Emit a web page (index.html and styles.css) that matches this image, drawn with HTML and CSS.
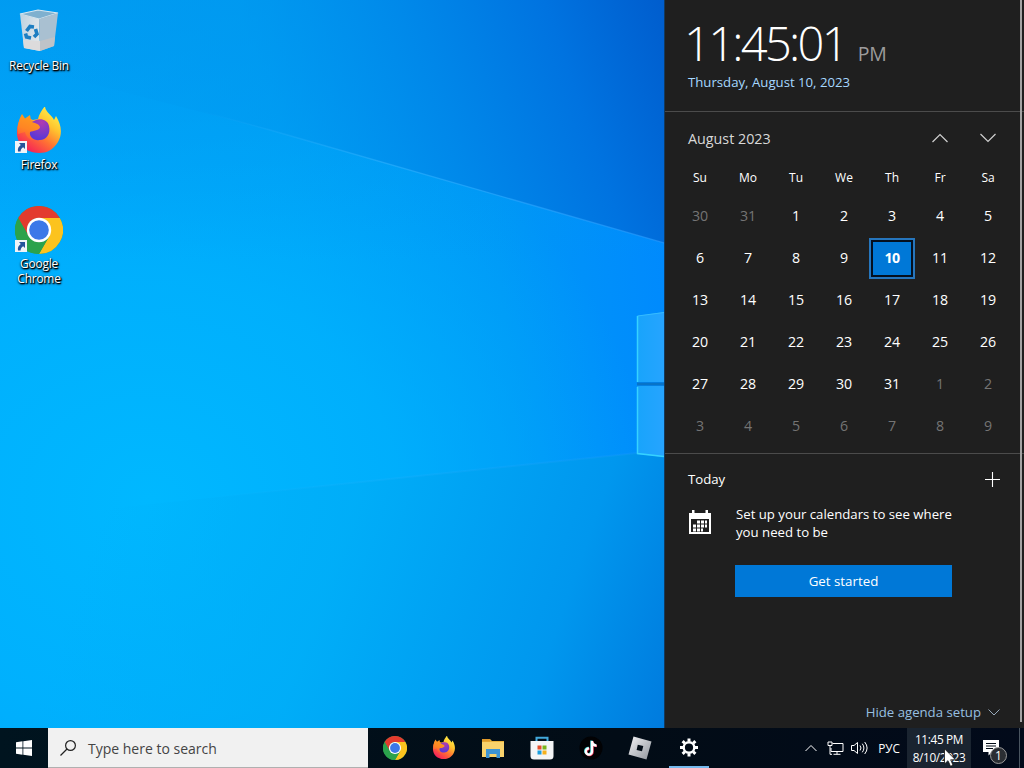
FILE: index.html
```html
<!DOCTYPE html>
<html lang="en">
<head>
  <meta charset="UTF-8">
  <meta name="viewport" content="width=device-width, initial-scale=1.0">
  <title>Desktop</title>
  <link rel="stylesheet" href="styles.css">
</head>
<body>
  <!-- shared icons -->
  <svg class="defs" width="0" height="0">
    <defs>
      <linearGradient id="ffBody" x1="0.85" y1="0.1" x2="0.25" y2="1">
        <stop offset="0" stop-color="#fff04a"/>
        <stop offset="0.3" stop-color="#ffc42e"/>
        <stop offset="0.6" stop-color="#ff7333"/>
        <stop offset="1" stop-color="#f5195c"/>
      </linearGradient>
      <linearGradient id="ffEar" x1="0.3" y1="0" x2="0" y2="1">
        <stop offset="0" stop-color="#ff9a1e"/>
        <stop offset="0.5" stop-color="#ff8524"/>
        <stop offset="1" stop-color="#ff4f3c"/>
      </linearGradient>
      <radialGradient id="ffGlobe" cx="0.6" cy="0.15" r="0.8">
        <stop offset="0" stop-color="#b13bb0"/>
        <stop offset="1" stop-color="#5b38d6"/>
      </radialGradient>
      <linearGradient id="binSide" x1="0" y1="0" x2="1" y2="0.3">
        <stop offset="0" stop-color="#bed2e0"/>
        <stop offset="1" stop-color="#dfe6eb"/>
      </linearGradient>
      <linearGradient id="robloxFill" x1="0" y1="0" x2="1" y2="1">
        <stop offset="0" stop-color="#f4f4f6"/>
        <stop offset="1" stop-color="#8e939b"/>
      </linearGradient>
    </defs>
    <symbol id="chrome" viewBox="0 0 48 48">
      <circle cx="24" cy="24" r="24" fill="#2ba24c"/>
      <path d="M24 12 H44.8 A24 24 0 0 1 24 48 L34.4 30 L24 24 Z" fill="#fcc31e"/>
      <path d="M3.2 12 A24 24 0 0 1 44.8 12 H24 A12 12 0 0 0 13.6 18 L13.6 30 Z" fill="#e33b2e"/>
      <path d="M3.2 12 L13.6 30 L24 36 L34.4 30 L24 48 A24 24 0 0 1 3.2 12 Z" fill="#2ba24c"/>
      <circle cx="24" cy="24" r="12.2" fill="#fff"/>
      <circle cx="24" cy="24" r="9.8" fill="#3c78e8"/>
    </symbol>
    <symbol id="firefox" viewBox="0 1 48 48">
      <path d="M30 0 C30 6 37 9 39 14 L41 10 C46 18 48 27 43 36 C38 44 32 47 24 47 C10 47 1 37 2 25 C2 19 4 14 7 10 C8 12 9 13 10 14 C12 12 15 12 18 14 L23 13 C24 8 27 4 30 0 Z" fill="url(#ffBody)"/>
      <path d="M7 8 L10 12.500 L15 9 L16 14 C20 16 24 17 25 20 C25 23 22 24 19 25 C15 26 15 31 19 34 C15 34 11 31 10 26 L3 28 C2 20 4 13 7 8 Z" fill="url(#ffEar)"/>
      <path d="M21 14 C26 12 33 14 34 20 C36 28 31 34 25 34 C19 35 14 31 15 26 C18 25 25 24 25 21 C24 18 20 17 17 16 Z" fill="url(#ffGlobe)"/>
    </symbol>
    <symbol id="shortcut" viewBox="0 0 12 12">
      <rect width="12" height="12" fill="#f0f3f8"/>
      <path d="M4 2 H10 V8 L8.2 6.3 C6.5 7.3 5.7 8.6 5.6 10.4 H3 C2.4 7.4 3.8 5.3 5.8 4 Z" fill="#24539b"/>
    </symbol>
  </svg>

  <div class="workspace">
    <main class="desktop">
      <svg class="wallpaper" viewBox="0 0 664 728" preserveAspectRatio="none">
        <defs>
          <linearGradient id="sky" x1="0" y1="300" x2="664" y2="240" gradientUnits="userSpaceOnUse">
            <stop offset="0" stop-color="#00a9fe"/>
            <stop offset="0.45" stop-color="#00a4fa"/>
            <stop offset="0.75" stop-color="#0098f7"/>
            <stop offset="1" stop-color="#008afd"/>
          </linearGradient>
          <!-- both wedges fade out towards the left edge -->
          <linearGradient id="upper" x1="60" y1="190" x2="674" y2="-20" gradientUnits="userSpaceOnUse">
            <stop offset="0" stop-color="#009cf2" stop-opacity="0"/>
            <stop offset="0.35" stop-color="#0099f0" stop-opacity="0.6"/>
            <stop offset="0.6" stop-color="#0087e9" stop-opacity="0.95"/>
            <stop offset="0.8" stop-color="#0073e0"/>
            <stop offset="1" stop-color="#005acb"/>
          </linearGradient>
          <linearGradient id="lower" x1="110" y1="490" x2="740" y2="710" gradientUnits="userSpaceOnUse">
            <stop offset="0" stop-color="#00b0f8" stop-opacity="0"/>
            <stop offset="0.35" stop-color="#00adf7" stop-opacity="0.8"/>
            <stop offset="0.7" stop-color="#0097ee"/>
            <stop offset="1" stop-color="#006dd6"/>
          </linearGradient>
          <linearGradient id="top" x1="0" y1="0" x2="0" y2="260" gradientUnits="userSpaceOnUse">
            <stop offset="0" stop-color="#0096ec" stop-opacity="0.7"/>
            <stop offset="1" stop-color="#0096ec" stop-opacity="0"/>
          </linearGradient>
          <radialGradient id="glow" cx="0" cy="0" r="1" gradientUnits="userSpaceOnUse" gradientTransform="translate(150 500) scale(500 440)">
            <stop offset="0" stop-color="#00b8ff"/>
            <stop offset="0.5" stop-color="#00b3fd" stop-opacity="0.75"/>
            <stop offset="1" stop-color="#00acfa" stop-opacity="0"/>
          </radialGradient>
          <linearGradient id="beam" x1="200" y1="0" x2="664" y2="0" gradientUnits="userSpaceOnUse">
            <stop offset="0" stop-color="#38b4ff" stop-opacity="0"/>
            <stop offset="0.4" stop-color="#38b4ff" stop-opacity="0.5"/>
            <stop offset="1" stop-color="#2c9cff" stop-opacity="0.6"/>
          </linearGradient>
          <linearGradient id="pane" x1="637" y1="0" x2="664" y2="0" gradientUnits="userSpaceOnUse">
            <stop offset="0" stop-color="#18a4fb"/>
            <stop offset="1" stop-color="#26a4ff"/>
          </linearGradient>
        </defs>
        <rect width="664" height="728" fill="url(#sky)"/>
        <rect width="664" height="728" fill="url(#glow)"/>
        <rect width="664" height="260" fill="url(#top)"/>
        <path d="M0 0 H664 V243 L270 130 L0 60 Z" fill="url(#upper)"/>
        <path d="M0 520 L637 453 H664 V728 H0 Z" fill="url(#lower)"/>
        <path d="M200 111 L270 130 L664 243" fill="none" stroke="url(#beam)" stroke-width="1.3"/>
        <path d="M200 499 L637 453" fill="none" stroke="url(#beam)" stroke-width="2" opacity="0.3"/>
        <path d="M637 316 L664 312 V382 H637 Z" fill="url(#pane)"/>
        <path d="M637 386 H664 V457 L637 454 Z" fill="url(#pane)"/>
        <path d="M637 384 H664" stroke="#0873c8" stroke-width="3"/>
        <path d="M664 312.500 L637.500 316" fill="none" stroke="#36bcff"/>
        <path d="M637.500 316 V382 M637.500 387 V453.500 L664 456.500" fill="none" stroke="#36d2ff" stroke-width="1.500"/>
      </svg>

      <div class="shortcuts">
        <div class="shortcut">
          <svg class="shortcut-icon" viewBox="0 0 48 48">
            <path d="M5 6 L23 2 L43 5 L24 11 Z" fill="#7fb0cf" stroke="#dbe8f0" stroke-width="1.200"/>
            <path d="M5 6 L24 11 L25 43 L9 40 Z" fill="url(#binSide)"/>
            <path d="M24 11 L43 5 L39 38 L25 43 Z" fill="#a9c0d1"/>
            <path d="M8 32 L25 33 V43 L9 40 Z" fill="#dcdbdc"/>
            <path d="M25 33 L40 29 L39 38 L25 43 Z" fill="#bfc3c8"/>
            <g fill="none" stroke="#1c7ec2" stroke-width="3.600">
              <path d="M11.500 23 L15 18.500 L19 19"/>
              <path d="M20.500 21 L22 26 L19 29"/>
              <path d="M16 30 L11.500 29 L10.500 25.500"/>
            </g>
          </svg>
          <span>Recycle Bin</span>
        </div>
        <div class="shortcut">
          <svg class="shortcut-icon"><use href="#firefox"/></svg>
          <svg class="shortcut-arrow"><use href="#shortcut"/></svg>
          <span>Firefox</span>
        </div>
        <div class="shortcut">
          <svg class="shortcut-icon"><use href="#chrome"/></svg>
          <svg class="shortcut-arrow"><use href="#shortcut"/></svg>
          <span>Google<br>Chrome</span>
        </div>
      </div>
    </main>

    <aside class="flyout">
      <header class="clock">
        <div class="clock-time"><span class="clock-digits">11:45:01</span><span class="clock-period">PM</span></div>
        <div class="clock-date">Thursday, August 10, 2023</div>
      </header>

      <section class="calendar">
        <div class="calendar-header">
          <span class="calendar-month">August 2023</span>
          <svg class="calendar-arrow" viewBox="0 0 16 16"><path d="M0.500 12 L8 4.500 L15.500 12"/></svg>
          <svg class="calendar-arrow" viewBox="0 0 16 16"><path d="M0.500 4 L8 11.500 L15.500 4"/></svg>
        </div>
        <div class="weekdays">
          <span>Su</span><span>Mo</span><span>Tu</span><span>We</span><span>Th</span><span>Fr</span><span>Sa</span>
        </div>
        <div class="days">
          <span class="other">30</span><span class="other">31</span><span>1</span><span>2</span><span>3</span><span>4</span><span>5</span>
          <span>6</span><span>7</span><span>8</span><span>9</span><span class="today">10</span><span>11</span><span>12</span>
          <span>13</span><span>14</span><span>15</span><span>16</span><span>17</span><span>18</span><span>19</span>
          <span>20</span><span>21</span><span>22</span><span>23</span><span>24</span><span>25</span><span>26</span>
          <span>27</span><span>28</span><span>29</span><span>30</span><span>31</span><span class="other">1</span><span class="other">2</span>
          <span class="other">3</span><span class="other">4</span><span class="other">5</span><span class="other">6</span><span class="other">7</span><span class="other">8</span><span class="other">9</span>
        </div>
      </section>

      <section class="agenda">
        <div class="agenda-header">
          <span>Today</span>
          <svg class="agenda-add" viewBox="0 0 15 15"><path d="M7.500 0 V15 M0 7.500 H15"/></svg>
        </div>
        <div class="agenda-setup">
          <svg class="agenda-icon" viewBox="0 0 22 24">
            <path d="M0 3 H3 V0 H5.500 V3 H16.500 V0 H19 V3 H22 V24 H0 Z M2 9 V22 H20 V9 Z" fill="#fff" fill-rule="evenodd"/>
            <path d="M8 12 H18 M4 16 H18 M4 20 H14" stroke="#fff" stroke-width="2.800" stroke-dasharray="3 1"/>
          </svg>
          <p>Set up your calendars to see where<br>you need to be</p>
        </div>
        <button class="agenda-button">Get started</button>
        <div class="agenda-hide">
          <span>Hide agenda setup</span>
          <svg viewBox="0 0 12 12"><path d="M0.500 3.500 L6 9 L11.500 3.500"/></svg>
        </div>
      </section>
    </aside>
  </div>

  <footer class="taskbar">
    <div class="start">
      <svg viewBox="0 0 16 16"><path d="M0 2.300 L6.500 1.300 V7.600 H0 Z M7.300 1.200 L16 0 V7.600 H7.300 Z M0 8.400 H6.500 V14.700 L0 13.700 Z M7.300 8.400 H16 V16 L7.300 14.800 Z" fill="#fff"/></svg>
    </div>
    <div class="search">
      <svg viewBox="0 0 16 16"><circle cx="10.500" cy="5.500" r="4.900"/><path d="M7 9 L0.500 15.500"/></svg>
      <span>Type here to search</span>
    </div>
    <div class="apps">
      <div class="app"><svg viewBox="0 0 24 24"><use href="#chrome"/></svg></div>
      <div class="app"><svg viewBox="0 0 24 24"><use href="#firefox"/></svg></div>
      <div class="app">
        <svg viewBox="0 0 24 24">
          <path d="M1 3 H9 L11 5 H23 V21 H1 Z" fill="#e9b23c"/>
          <path d="M1 6 H23 V21 H1 Z" fill="#f9d26c"/>
          <path d="M1 3 H9 V5.500 H1 Z" fill="#e09a2a"/>
          <path d="M5 13 H19 V22 H15.500 V18 H8.500 V22 H5 Z" fill="#3d94d4"/>
        </svg>
      </div>
      <div class="app">
        <svg viewBox="0 0 24 24">
          <path d="M6.500 5.500 V1.700 H17.500 V5.500" fill="none" stroke="#42a9dc" stroke-width="2"/>
          <path d="M0.500 5 H23.500 V20 Q23.500 23.500 20 23.500 H4 Q0.500 23.500 0.500 20 Z" fill="#f4f5f6"/>
          <path d="M7.500 9.500 H11.500 V13.500 H7.500 Z" fill="#e54d2b"/>
          <path d="M12.500 9.500 H16.500 V13.500 H12.500 Z" fill="#79b51c"/>
          <path d="M7.500 14.500 H11.500 V18.500 H7.500 Z" fill="#1a9ede"/>
          <path d="M12.500 14.500 H16.500 V18.500 H12.500 Z" fill="#f5b01c"/>
        </svg>
      </div>
      <div class="app">
        <svg viewBox="0 0 24 24">
          <circle cx="12" cy="12" r="11.500" fill="#020204"/>
          <g fill="none" stroke-width="2.300">
            <path d="M12.400 4.500 V15 A3.100 3.100 0 1 1 9.600 11.900 M12.400 5 Q13 9 17 9.200" stroke="#45d8dc"/>
            <path d="M13.600 5.500 V16 A3.100 3.100 0 1 1 10.600 12.900 M13.600 6 Q14 9.800 18 10" stroke="#ee3b5c"/>
            <path d="M13 5 V15.500 A3.100 3.100 0 1 1 10 12.400 M13 5.500 Q13.500 9.300 17.500 9.600" stroke="#fff"/>
          </g>
        </svg>
      </div>
      <div class="app">
        <svg viewBox="0 0 24 24"><path d="M5.500 0.500 L23.500 5.500 L18.500 23.500 L0.500 18.500 Z M9.800 8.700 L8.600 14 L14 15.200 L15.300 10 Z" fill="url(#robloxFill)" fill-rule="evenodd"/></svg>
      </div>
      <div class="app active">
        <svg viewBox="0 0 24 24">
          <circle cx="12" cy="12.500" r="5.300" fill="none" stroke="#fff" stroke-width="2.400"/>
          <path d="M12 3.500 V6.500 M12 18.500 V21.500 M3 12.500 H6 M18 12.500 H21 M5.600 6.100 L7.800 8.300 M16.200 16.700 L18.400 18.900 M5.600 18.900 L7.800 16.700 M16.200 8.300 L18.400 6.100" stroke="#fff" stroke-width="3"/>
        </svg>
      </div>
    </div>
    <div class="tray">
      <svg class="tray-more" viewBox="0 0 12 12"><path d="M0.500 9 L6 3.500 L11.500 9"/></svg>
      <svg class="tray-network" viewBox="0 0 17 14"><path d="M5.500 2.500 H16 V10.500 H4 V7 M10 10.500 V13.300 M6.500 13.300 H13.500 M1 1 H5 V4.500 H1 Z M3 4.500 V13.300 H5"/></svg>
      <svg class="tray-volume" viewBox="0 0 17 14"><path d="M0.500 4.500 H3 L6.500 1.500 V12.500 L3 9.500 H0.500 Z M9 4.500 Q11 7 9 9.500 M11.300 2.700 Q14.500 7 11.300 11.300 M13.700 1 Q18.500 7 13.700 13"/></svg>
      <span class="tray-language">РУС</span>
      <div class="tray-clock"><span>11:45 PM</span><span>8/10/2023</span></div>
      <div class="tray-notifications">
        <svg viewBox="0 0 16 16"><path d="M0 0 H16 V12 H9 L5.500 15.500 V12 H0 Z" fill="#fff"/><path d="M3 3.500 H13 M3 6 H13 M3 8.500 H10" stroke="#020b16" stroke-width="1"/></svg>
        <span class="badge">1</span>
      </div>
    </div>
  </footer>

  <svg class="cursor" viewBox="0 0 12 19"><path d="M0.500 0.800 V16 L4 12.700 L6.500 18.300 L9 17.200 L6.700 11.800 H11.500 Z" fill="#fff" stroke="#111" stroke-width="0.800"/></svg>
</body>
</html>
```
FILE: styles.css
```css
* {
  margin: 0;
  padding: 0;
  box-sizing: border-box;
}
body {
  width: 1024px;
  height: 768px;
  display: flex;
  flex-direction: column;
  overflow: hidden;
  position: relative;
  font-family: "Open Sans", "Noto Sans", sans-serif;
  color: #fff;
}
svg {
  display: block;
  flex-shrink: 0;
}
.defs {
  position: absolute;
}
.workspace {
  display: flex;
  height: 728px;
}

/* desktop */
.desktop {
  width: 664px;
  position: relative;
}
.wallpaper {
  position: absolute;
  top: 0;
  left: 0;
  width: 664px;
  height: 728px;
}
.shortcuts {
  position: relative;
  width: 78px;
  padding-top: 8px;
}
.shortcut {
  height: 99px;
  display: flex;
  flex-direction: column;
  align-items: center;
  position: relative;
  text-align: center;
  font-size: 11.9px;
  line-height: 15px;
  letter-spacing: -0.2px;
  text-shadow: 1px 1px 1px #000, 1px 1px 2px #000, 0 1px 2px rgba(0, 0, 0, 0.8);
}
.shortcut-icon {
  width: 48px;
  height: 48px;
  margin-bottom: 2px;
}
.shortcut-arrow {
  position: absolute;
  top: 34px;
  left: 15px;
  width: 12px;
  height: 12px;
}

/* calendar flyout */
.flyout {
  width: 360px;
  background: #1f1f1f;
  border-left: 1px solid #14395c;
  position: relative;
  display: flex;
  flex-direction: column;
}
.flyout::after {
  content: "";
  position: absolute;
  top: 0;
  right: 2px;
  width: 2px;
  height: 722px;
  background: #a4a4a4;
}
.clock {
  height: 112px;
  padding: 13px 0 0 19px;
  border-bottom: 1px solid #4b4b4b;
}
.clock-time {
  display: flex;
  align-items: baseline;
  height: 60px;
  line-height: 60px;
}
.clock-digits {
  font-size: 47px;
  font-weight: 300;
  letter-spacing: -2.7px;
}
.clock-period {
  margin-left: 12px;
  font-size: 19.5px;
  color: #9c9c9c;
  letter-spacing: -0.3px;
}
.clock-date {
  margin-left: 4px;
  font-size: 13.2px;
  line-height: 19px;
  color: #a6d8ff;
}
.calendar {
  height: 342px;
  padding: 13px 11px 0;
  border-bottom: 1px solid #4b4b4b;
}
.calendar-header {
  display: flex;
  align-items: center;
  height: 26px;
  padding: 0 17px 0 12px;
}
.calendar-month {
  flex: 1;
  font-size: 14.3px;
  color: #d8d8d8;
}
.calendar-arrow {
  width: 16px;
  height: 16px;
  margin-left: 32px;
}
.calendar-arrow path {
  fill: none;
  stroke: #d0d0d0;
  stroke-width: 1.2;
}
.weekdays,
.days {
  display: grid;
  grid-template-columns: repeat(7, 48px);
  text-align: center;
}
.weekdays {
  height: 44px;
  line-height: 54px;
  font-size: 12px;
}
.days {
  grid-auto-rows: 42px;
  line-height: 42px;
  font-size: 14.2px;
}
.days .other {
  color: #747474;
}
.days .today {
  margin: 1px 1px 0;
  background: #0078d7;
  border: 2px solid #2676bd;
  box-shadow: inset 0 0 0 2px #04101f;
  line-height: 36px;
  font-weight: 700;
  letter-spacing: -0.6px;
}
.agenda {
  flex: 1;
  display: flex;
  flex-direction: column;
  padding: 15px 24px 7px 23px;
  font-size: 13.2px;
  line-height: 18px;
}
.agenda-header {
  display: flex;
  justify-content: space-between;
  align-items: center;
  height: 20px;
}
.agenda-add {
  width: 15px;
  height: 15px;
}
.agenda-add path {
  stroke: #fff;
  stroke-width: 1.1;
}
.agenda-setup {
  display: flex;
  gap: 25px;
  margin-top: 16px;
}
.agenda-icon {
  width: 22px;
  height: 24px;
  margin: 5px 0 0 1px;
}
.agenda-button {
  width: 217px;
  height: 32px;
  margin: 24px 0 0 47px;
  border: none;
  background: #0078d7;
  color: #fff;
  font-family: inherit;
  font-size: 13.3px;
}
.agenda-hide {
  display: flex;
  justify-content: flex-end;
  align-items: center;
  gap: 7px;
  margin-top: auto;
  color: #97bfe0;
}
.agenda-hide svg {
  width: 12px;
  height: 12px;
}
.agenda-hide path {
  fill: none;
  stroke: #97a9ba;
}

/* taskbar */
.taskbar {
  display: flex;
  height: 40px;
  background: linear-gradient(90deg, #00141f, #020c16 60%, #020a1a);
}
.start {
  width: 48px;
  display: flex;
  align-items: center;
  justify-content: center;
}
.start svg {
  width: 16px;
  height: 16px;
}
.search {
  width: 320px;
  display: flex;
  align-items: center;
  gap: 12px;
  padding: 1px 0 0 12px;
  background: #f1f1f1;
  border-bottom: 1px solid #b0b0b0;
  color: #444;
  font-size: 14px;
}
.search svg {
  width: 16px;
  height: 16px;
}
.search svg * {
  fill: none;
  stroke: #222;
  stroke-width: 1.2;
}
.apps {
  display: flex;
  gap: 9px;
  margin-left: 7px;
}
.app {
  width: 40px;
  display: flex;
  align-items: center;
  justify-content: center;
}
.app svg {
  width: 24px;
  height: 24px;
}
.app.active {
  border-bottom: 2px solid #76b9ed;
}
.tray {
  display: flex;
  align-items: center;
  margin-left: auto;
  font-size: 11.8px;
}
.tray > svg {
  fill: none;
  stroke: #fff;
}
.tray-more {
  width: 12px;
  height: 12px;
}
.tray-network {
  width: 17px;
  height: 14px;
  margin-left: 10px;
}
.tray-volume {
  width: 17px;
  height: 14px;
  margin-left: 7px;
}
.tray-language {
  margin-left: 10px;
}
.tray-clock {
  width: 64px;
  height: 40px;
  margin-left: 7px;
  padding-bottom: 1px;
  display: flex;
  flex-direction: column;
  justify-content: center;
  text-align: center;
  line-height: 18px;
  background: #1a2430;
  letter-spacing: -0.35px;
}
.tray-notifications {
  width: 49px;
  height: 40px;
  padding: 12px 0 0 12px;
  border-right: 1px solid #4a5560;
  position: relative;
  margin-right: 4px;
}
.tray-notifications svg {
  width: 16px;
  height: 16px;
}
.badge {
  position: absolute;
  top: 19px;
  left: 19px;
  width: 17px;
  height: 17px;
  border: 1px solid #9a9a9a;
  border-radius: 50%;
  background: #2b2e33;
  font-size: 12px;
  line-height: 15px;
  text-align: center;
}
.cursor {
  position: absolute;
  top: 748px;
  left: 944px;
  width: 12px;
  height: 19px;
}
```
